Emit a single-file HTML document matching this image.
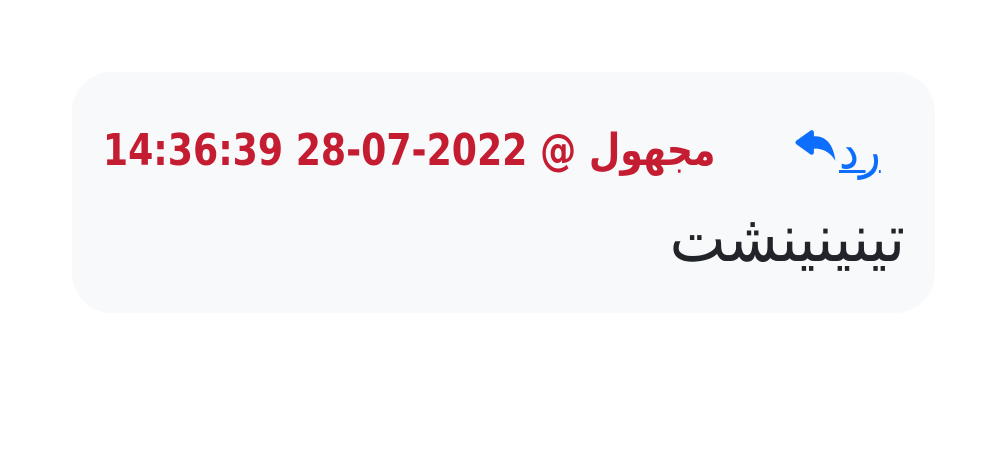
<!DOCTYPE html>
<html><head><meta charset="utf-8"><style>
body{margin:0;width:1008px;height:450px;background:#fff;overflow:hidden;position:relative;font-family:"DejaVu Sans Condensed","DejaVu Sans",sans-serif}
.card{position:absolute;left:72px;top:72px;width:863px;height:241px;background:#f8f9fa;border-radius:40px}
.hdr{position:absolute;right:293px;top:124px;color:#c41d32;font-weight:bold;font-size:44px;line-height:54px;white-space:nowrap;direction:rtl;transform-origin:right center;transform:scaleX(0.915)}
.reply{position:absolute;left:795px;top:124px;color:#0d6efd;font-size:50px;line-height:54px;white-space:nowrap}
.reply span{text-decoration:underline;text-decoration-thickness:3px}
.body{position:absolute;right:103px;top:199px;color:#212529;font-size:66px;line-height:80px;direction:rtl;white-space:nowrap}
</style></head><body>
<div class="card"></div>
<div class="hdr">مجهول @ <span dir="ltr">14:36:39 28-07-2022</span></div>
<div class="reply"><svg width="44" height="40" viewBox="1 2 14 13" style="vertical-align:4px"><path fill="#0d6efd" d="M5.921 11.9 1.353 8.62a.72.72 0 0 1 0-1.238L5.921 4.1A.716.716 0 0 1 7 4.719V6c1.5 0 6 0 7 8-2.5-4.5-7-4-7-4v1.281c0 .56-.606.898-1.079.62z"/></svg><span>رد</span></div>
<div class="body">تينينينشت</div>
</body></html>
